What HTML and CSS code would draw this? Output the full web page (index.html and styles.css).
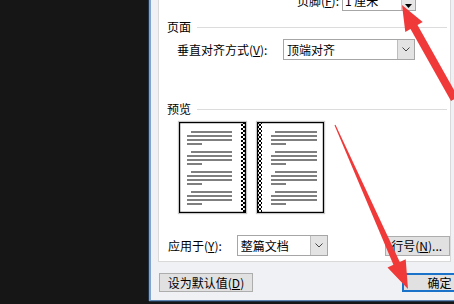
FILE: index.html
```html
<!DOCTYPE html>
<html lang="zh-CN">
<head>
<meta charset="utf-8">
<title>页面设置</title>
<link rel="stylesheet" href="styles.css">
</head>
<body>
<div class="screen">
  <div class="dialog">
    <div class="panel">
      <div class="row row-footer">
        <span class="lbl lbl-footer">页脚(<u>F</u>):</span>
        <div class="spin">
          <span class="val">1 厘米</span>
          <span class="spin-btns"><span class="spin-half"></span><span class="spin-half"><svg width="7" height="4" viewBox="0 0 7 4"><path d="M0 0H7L3.5 4Z" fill="#000"/></svg></span></span>
        </div>
      </div>
      <div class="group"><span class="group-title">页面</span><i class="rule"></i></div>
      <div class="row row-valign">
        <span class="lbl lbl-valign">垂直对齐方式(<u>V</u>):</span>
        <div class="combo combo-valign">
          <span class="val">顶端对齐</span>
          <span class="drop"><svg width="8" height="5" viewBox="0 0 8 5"><path d="M0.5 0.5L4 4L7.5 0.5" fill="none" stroke="#444" stroke-width="1"/></svg></span>
        </div>
      </div>
      <div class="group group-preview"><span class="group-title">预览</span><i class="rule"></i></div>
      <div class="pages">
        <svg class="sheet" width="67" height="91" viewBox="0 0 67 91">
          <defs><pattern id="chkL" width="4" height="4" patternUnits="userSpaceOnUse"><rect width="2" height="2" fill="#000"/><rect x="2" y="2" width="2" height="2" fill="#000"/></pattern></defs>
          <rect x="0.6" y="0.6" width="65.8" height="89.8" fill="#fff" stroke="#000" stroke-width="1.2"/>
          <rect x="62" y="1" width="4" height="89" fill="url(#chkL)"/>
          <g stroke="#000" stroke-width="1.2">
            <path d="M12 10H53M8 14H53M8 18H53M8 22H23"/>
            <path d="M12 30H53M8 34H53M8 38H53M8 42H23"/>
            <path d="M12 50H53M8 54H53M8 58H53M8 62H23"/>
            <path d="M12 70H53M8 74H53M8 78H53M8 82H23"/>
          </g>
        </svg>
        <svg class="sheet" width="67" height="91" viewBox="0 0 67 91">
          <defs><pattern id="chkR" width="4" height="4" patternUnits="userSpaceOnUse"><rect width="2" height="2" fill="#000"/><rect x="2" y="2" width="2" height="2" fill="#000"/></pattern></defs>
          <rect x="0.6" y="0.6" width="65.8" height="89.8" fill="#fff" stroke="#000" stroke-width="1.2"/>
          <rect x="1" y="1" width="4" height="89" fill="url(#chkR)"/>
          <g stroke="#000" stroke-width="1.2">
            <path d="M18 10H60M14 14H60M14 18H60M14 22H29"/>
            <path d="M18 30H60M14 34H60M14 38H60M14 42H29"/>
            <path d="M18 50H60M14 54H60M14 58H60M14 62H29"/>
            <path d="M18 70H60M14 74H60M14 78H60M14 82H29"/>
          </g>
        </svg>
      </div>
      <div class="row row-apply">
        <span class="lbl lbl-apply">应用于(<u>Y</u>):</span>
        <div class="combo combo-apply">
          <span class="val">整篇文档</span>
          <span class="drop"><svg width="8" height="5" viewBox="0 0 8 5"><path d="M0.5 0.5L4 4L7.5 0.5" fill="none" stroke="#444" stroke-width="1"/></svg></span>
        </div>
        <button class="btn btn-lines">行号(<u>N</u>)...</button>
      </div>
    </div>
    <div class="footer">
      <button class="btn btn-default">设为默认值(<u>D</u>)</button>
      <button class="btn btn-ok">确定</button>
    </div>
  </div>
  <svg class="arrows" width="454" height="304" viewBox="0 0 454 304">
    <polygon fill="#f03a3a" points="402,5 422.7,22.1 417.5,25 458,97 451,101 410.5,29 405.3,31.9"/>
    <polygon fill="#f03a3a" points="334.5,125.2 335.5,124.8 399.8,262 405.7,259.3 408,289 387.5,267.5 393.4,264.8"/>
  </svg>
</div>
</body>
</html>
```
FILE: styles.css
```css
* {
  box-sizing: border-box;
}

html,
body {
  margin: 0;
  padding: 0;
}

body {
  background: #161616;
  font-family: "Noto Sans CJK SC", "Microsoft YaHei", sans-serif;
  font-size: 12px;
  color: #000;
}

.screen {
  position: relative;
  width: 454px;
  height: 304px;
  overflow: hidden;
  background: #161616;
}

.dialog {
  margin-left: 149px;
  margin-top: -10px;
  width: 360px;
  background: #eff1f4;
  border-left: 2px solid #7fa4cf;
  border-bottom: 1px solid #5f86b3;
  box-shadow: -1px 0 0 #22344a, 0 1px 0 #22344a;
  padding: 0 0 8px 7px;
}

.panel {
  width: 293px;
  background: #fff;
  border: 1px solid #d9d9d9;
  padding-bottom: 5px;
}

.row {
  display: flex;
  align-items: center;
}

.lbl {
  line-height: 16px;
  white-space: nowrap;
}

u {
  text-decoration: underline;
  text-underline-offset: 1px;
}

.row-footer {
  height: 20px;
  padding-left: 132px;
}

.lbl-footer {
  width: 48px;
  text-align: right;
}

.spin {
  margin-left: 3px;
  width: 74px;
  height: 20px;
  border: 1px solid #a6a6a6;
  background: #fff;
  display: flex;
}

.spin .val {
  flex: 1;
  padding-left: 2px;
  line-height: 18px;
}

.spin-btns {
  width: 14px;
  display: flex;
  flex-direction: column;
  border-left: 1px solid #c8c8c8;
}

.spin-half {
  flex: 1;
  background: #e6e6e6;
  display: flex;
  align-items: center;
  justify-content: center;
}

.group {
  display: flex;
  align-items: center;
  height: 14px;
  margin-top: 9px;
  padding-left: 8px;
  padding-right: 3px;
}

.group-title {
  line-height: 14px;
}

.rule {
  flex: 1;
  margin-left: 6px;
  border-top: 1px solid #dcdcdc;
}

.group-preview {
  margin-top: 42px;
}

.row-valign {
  height: 21px;
  margin-top: 5px;
  padding-left: 18px;
}

.lbl-valign {
  width: 106px;
}

.combo {
  height: 21px;
  border: 1px solid #a6a6a6;
  background: #fff;
  display: flex;
}

.combo .val {
  flex: 1;
  padding-left: 3px;
  line-height: 19px;
}

.drop {
  width: 17px;
  background: #e3e3e3;
  border-left: 1px solid #bdbdbd;
  display: flex;
  align-items: center;
  justify-content: center;
}

.combo-valign {
  width: 132px;
}

.pages {
  display: flex;
  gap: 11px;
  margin-top: 6px;
  padding-left: 20px;
  height: 91px;
}

.sheet {
  display: block;
  box-shadow: 0 0 1px 1px rgba(0, 0, 0, 0.22);
}

.row-apply {
  margin-top: 22px;
  height: 21px;
  padding-left: 9px;
}

.lbl-apply {
  width: 69px;
}

.combo-apply {
  width: 92px;
}

.btn {
  font-family: inherit;
  font-size: 12px;
  color: #000;
  background: #e1e1e1;
  border: 1px solid #adadad;
  padding: 0;
  margin: 0;
  line-height: 16px;
  white-space: nowrap;
}

.btn-lines {
  margin-left: 57px;
  width: 65px;
  height: 20px;
  text-align: left;
  padding-left: 5px;
  overflow: visible;
}

.footer {
  display: flex;
  align-items: center;
  margin-top: 11px;
  height: 19px;
}

.btn-default {
  margin-left: 1px;
  width: 94px;
  height: 19px;
}

.btn-ok {
  margin-left: 149px;
  width: 75px;
  height: 19px;
  border: 2px solid #1a73c9;
}

.arrows {
  position: absolute;
  left: 0;
  top: 0;
  pointer-events: none;
}
```
